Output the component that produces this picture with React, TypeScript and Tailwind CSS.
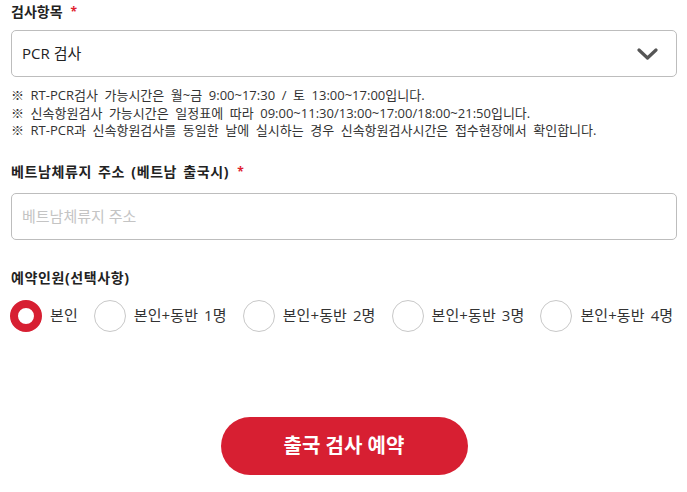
import React, { useState } from "react";

const font = { fontFamily: '"Open Sans", "Noto Sans CJK KR", sans-serif' };

function Label({ children, required, wide }: { children: React.ReactNode; required?: boolean; wide?: boolean }) {
  return (
    <div
      className={
        wide
          ? "flex items-center h-[24px] text-[14px] font-bold text-[#222] leading-[24px] tracking-[0.6px] [word-spacing:2px]"
          : "flex items-center h-[24px] text-[14px] font-bold text-[#222] leading-[24px]"
      }
    >
      <span className="whitespace-nowrap">{children}</span>
      {required && <span className="ml-[8px] text-[#e0202e] text-[12px]">*</span>}
    </div>
  );
}

const options = ["본인", "본인+동반 1명", "본인+동반 2명", "본인+동반 3명", "본인+동반 4명"];

export default function App() {
  const [sel, setSel] = useState(0);
  return (
    <div className="w-[687px] h-[492px] bg-white pl-[11px] pr-[10px] overflow-hidden" style={font}>
      <Label required>검사항목</Label>
      <div className="mt-[6px] h-[47px] border border-[#bdbdbd] rounded-[5px] flex items-center justify-between pl-[10px] pr-[18px]">
        <span className="text-[15px] text-[#222]">PCR 검사</span>
        <svg width="21" height="12" viewBox="0 0 21 12">
          <path d="M2 2 L10.5 10 L19 2" fill="none" stroke="#555" strokeWidth="3.2" strokeLinecap="round" strokeLinejoin="round" />
        </svg>
      </div>
      <div className="mt-[10px] text-[13px] leading-[17.5px] text-[#333] [word-spacing:3.2px] whitespace-nowrap">
        <p>※ RT-PCR검사 가능시간은 월~금 9:00~17:30 / 토 13:00~17:00입니다.</p>
        <p>※ 신속항원검사 가능시간은 일정표에 따라 09:00~11:30/13:00~17:00/18:00~21:50입니다.</p>
        <p>※ RT-PCR과 신속항원검사를 동일한 날에 실시하는 경우 신속항원검사시간은 접수현장에서 확인합니다.</p>
      </div>
      <div className="mt-[20px]">
        <Label required wide>베트남체류지 주소 (베트남 출국시)</Label>
      </div>
      <div className="mt-[9px] h-[47px] border border-[#bdbdbd] rounded-[5px] flex items-center px-[10px]">
        <span className="text-[15px] text-[#c4c4c4]">베트남체류지 주소</span>
      </div>
      <div className="mt-[26px]">
        <Label wide>예약인원(선택사항)</Label>
      </div>
      <div className="mt-[10px] flex flex-nowrap items-center gap-[16px] -ml-[1px]">
        {options.map((o, i) => (
          <button key={o} onClick={() => setSel(i)} className="flex shrink-0 items-center gap-[8px]">
            <span
              className={
                sel === i
                  ? "w-[32px] h-[32px] rounded-full border-[8px] border-[#d71f32] bg-white"
                  : "w-[32px] h-[32px] rounded-full border border-[#c8c8c8] bg-white"
              }
            />
            <span className="text-[15px] text-[#333] tracking-[0.1px] [word-spacing:2px] whitespace-nowrap">{o}</span>
          </button>
        ))}
      </div>
      <div className="mt-[85px] flex justify-center">
        <button className="w-[247px] h-[58px] rounded-full bg-[#d71f32] text-white text-[20px] font-bold">
          출국 검사 예약
        </button>
      </div>
    </div>
  );
}
